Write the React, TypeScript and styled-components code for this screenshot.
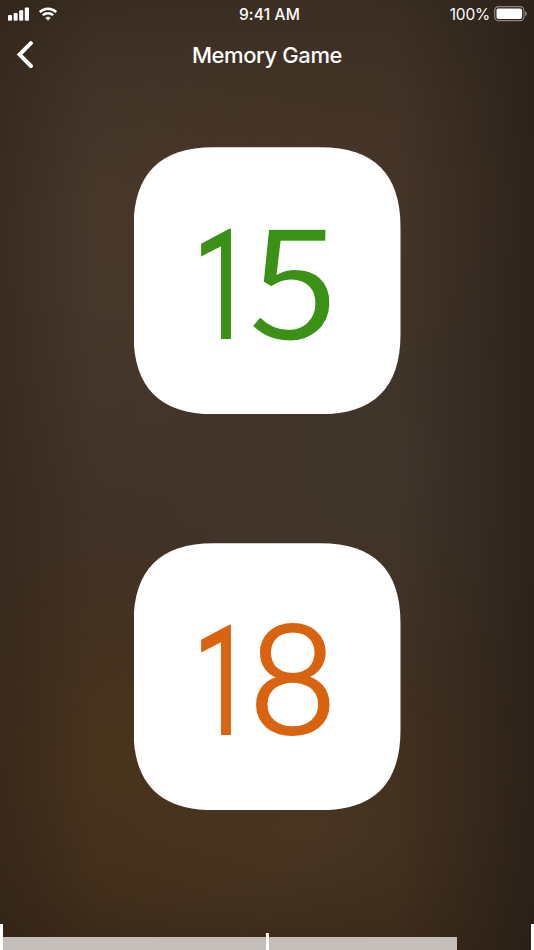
import React from "react";
import styled, { createGlobalStyle } from "styled-components";

const GlobalStyle = createGlobalStyle`
  * { box-sizing: border-box; }
  body { margin: 0; background: #3f3226; }
`;

const Screen = styled.main`
  display: flex;
  flex-direction: column;
  width: 534px;
  height: 950px;
  overflow: hidden;
  color: #fff;
  font-family: Inter, sans-serif;
  background:
    linear-gradient(90deg, rgba(46, 34, 24, 0.5) 0, rgba(46, 34, 24, 0) 18%, rgba(42, 33, 25, 0) 74%, rgba(40, 31, 24, 0.4) 88%, rgba(40, 31, 24, 0.8) 100%),
    radial-gradient(ellipse 260px 240px at 110px 755px, rgba(75, 53, 28, 0.8), rgba(75, 53, 28, 0) 100%),
    radial-gradient(ellipse 300px 200px at 300px 830px, rgba(75, 56, 36, 0.8), rgba(75, 56, 36, 0) 100%),
    radial-gradient(ellipse 330px 210px at 310px 170px, rgba(72, 54, 40, 0.75), rgba(72, 54, 40, 0) 100%),
    radial-gradient(ellipse 240px 260px at 100px 250px, rgba(73, 58, 45, 0.8), rgba(73, 58, 45, 0) 100%),
    radial-gradient(ellipse 300px 260px at 390px 460px, rgba(64, 54, 43, 0.85), rgba(64, 54, 43, 0) 100%),
    linear-gradient(180deg, #382c21 0, #423328 22%, #413228 55%, #3f2d1d 80%, #352516 100%);
`;

const StatusBar = styled.header`
  display: grid;
  grid-template-columns: 1fr auto 1fr;
  align-items: center;
  height: 27px;
  padding: 0 6px 0 8px;
  font-size: 15.5px;
`;

const StatusGroup = styled.div<{ $end?: boolean }>`
  display: flex;
  align-items: center;
  justify-content: ${({ $end }) => ($end ? "flex-end" : "flex-start")};
  gap: ${({ $end }) => ($end ? "4px" : "9px")};
  svg { display: block; }
`;

const Clock = styled.time`
  font-weight: 500;
  letter-spacing: 0.18px;
  margin-left: 3px;
  padding-top: 1px;
`;

const Percent = styled.span`
  letter-spacing: -0.2px;
  padding-top: 1px;
`;

const NavBar = styled.nav`
  display: grid;
  grid-template-columns: 60px 1fr 60px;
  align-items: center;
  height: 56px;
`;

const BackButton = styled.button`
  display: flex;
  padding: 0 0 0 15px;
  border: 0;
  background: none;
  color: inherit;
`;

const Title = styled.h1`
  margin: -1px 0 0;
  text-align: center;
  font-size: 22px;
  font-weight: 550;
  line-height: 28px;
  letter-spacing: -0.4px;
`;

const Cards = styled.section`
  display: flex;
  flex: 1;
  flex-direction: column;
  align-items: center;
  gap: 129px;
  padding-top: 64.3px;
`;

const Card = styled.div<{ $color: string }>`
  display: flex;
  flex: none;
  width: 267px;
  height: 267px;
  padding-left: 58.5px;
  background: #fff;
  color: ${({ $color }) => $color};
  clip-path: path("M0 80C0 26.7 26.7 0 80 0H187C240.3 0 267 26.7 267 80V187C267 240.3 240.3 267 187 267H80C26.7 267 0 240.3 0 187Z");
`;

const Digit = styled.span`
  display: block;
  flex: none;
  line-height: 267px;
  transform-origin: left center;
`;

const One = styled(Digit)`
  width: 57px;
  font-family: Roboto, sans-serif;
  font-size: 154px;
  transform: translateY(5.5px) scaleX(0.71);
`;

const Five = styled(Digit)`
  font-family: "Noto Sans CJK JP", sans-serif;
  font-size: 154px;
  -webkit-text-stroke: 1px #fff;
  transform: translate(0.5px, -9.5px) scaleX(1.05) skewX(-1.5deg);
`;

const Eight = styled(Digit)`
  font-family: Lato, sans-serif;
  font-size: 151px;
  font-weight: 300;
  -webkit-text-stroke: 4px currentColor;
  transform: translateY(-2px);
`;

const ProgressTrack = styled.footer`
  display: grid;
  height: 26px;
  align-items: end;
  > * { grid-area: 1 / 1; }
`;

const ProgressFill = styled.div`
  width: 457px;
  height: 13px;
  background: #c3beb9;
`;

const Ticks = styled.div`
  display: flex;
  align-items: flex-end;
  justify-content: space-between;
`;

const Tick = styled.i<{ $height: number }>`
  width: 3px;
  height: ${({ $height }) => $height}px;
  background: #fff;
`;

const SignalIcon = () => (
  <svg width="22" height="14" viewBox="0 0 22 14" fill="#fff">
    <rect x="0" y="8" width="4" height="5.8" rx="1" />
    <rect x="5.6" y="6" width="4" height="7.8" rx="1" />
    <rect x="11.2" y="3.2" width="4" height="10.6" rx="1" />
    <rect x="16.8" y="0.5" width="4.2" height="13.3" rx="1" />
  </svg>
);

const WifiIcon = () => (
  <svg width="18" height="14" viewBox="0 0 18 14" fill="none" stroke="#fff" strokeWidth="2.5">
    <path d="M0.8 5C5.3 0.7 12.7 0.7 17.2 5" />
    <path d="M3.8 8.2C6.7 5.5 11.3 5.5 14.2 8.2" />
    <path d="M6.3 10.9C7.8 9.5 10.2 9.5 11.7 10.9L9 13.6Z" fill="#fff" stroke="none" />
  </svg>
);

const BatteryIcon = () => (
  <svg width="34" height="16" viewBox="0 0 34 16" fill="none">
    <rect x="0.7" y="0.7" width="29.2" height="14" rx="3.7" stroke="#fff" strokeOpacity="0.45" strokeWidth="1.2" />
    <rect x="2.5" y="2.5" width="25.6" height="10.4" rx="1.9" fill="#fff" />
    <path d="M31.2 5.2C33.4 6 33.4 9.4 31.2 10.2Z" fill="#fff" fillOpacity="0.5" />
  </svg>
);

const BackIcon = () => (
  <svg width="20" height="28" viewBox="0 0 20 28" fill="none" stroke="#fff" strokeWidth="4" strokeLinecap="round" strokeLinejoin="miter">
    <path d="M15.9 2.2L4.6 13.6L15.9 25" />
  </svg>
);

const cards = [
  { color: "#3a9116", Last: Five, last: "5" },
  { color: "#d96410", Last: Eight, last: "8" },
];

export default function App() {
  return (
    <>
      <GlobalStyle />
      <Screen>
        <StatusBar>
          <StatusGroup><SignalIcon /><WifiIcon /></StatusGroup>
          <Clock>9:41 AM</Clock>
          <StatusGroup $end><Percent>100%</Percent><BatteryIcon /></StatusGroup>
        </StatusBar>
        <NavBar>
          <BackButton aria-label="Back"><BackIcon /></BackButton>
          <Title>Memory Game</Title>
        </NavBar>
        <Cards>
          {cards.map(({ color, Last, last }) => (
            <Card key={last} $color={color}><One>1</One><Last>{last}</Last></Card>
          ))}
        </Cards>
        <ProgressTrack>
          <ProgressFill />
          <Ticks><Tick $height={26} /><Tick $height={17} /><Tick $height={26} /></Ticks>
        </ProgressTrack>
      </Screen>
    </>
  );
}
